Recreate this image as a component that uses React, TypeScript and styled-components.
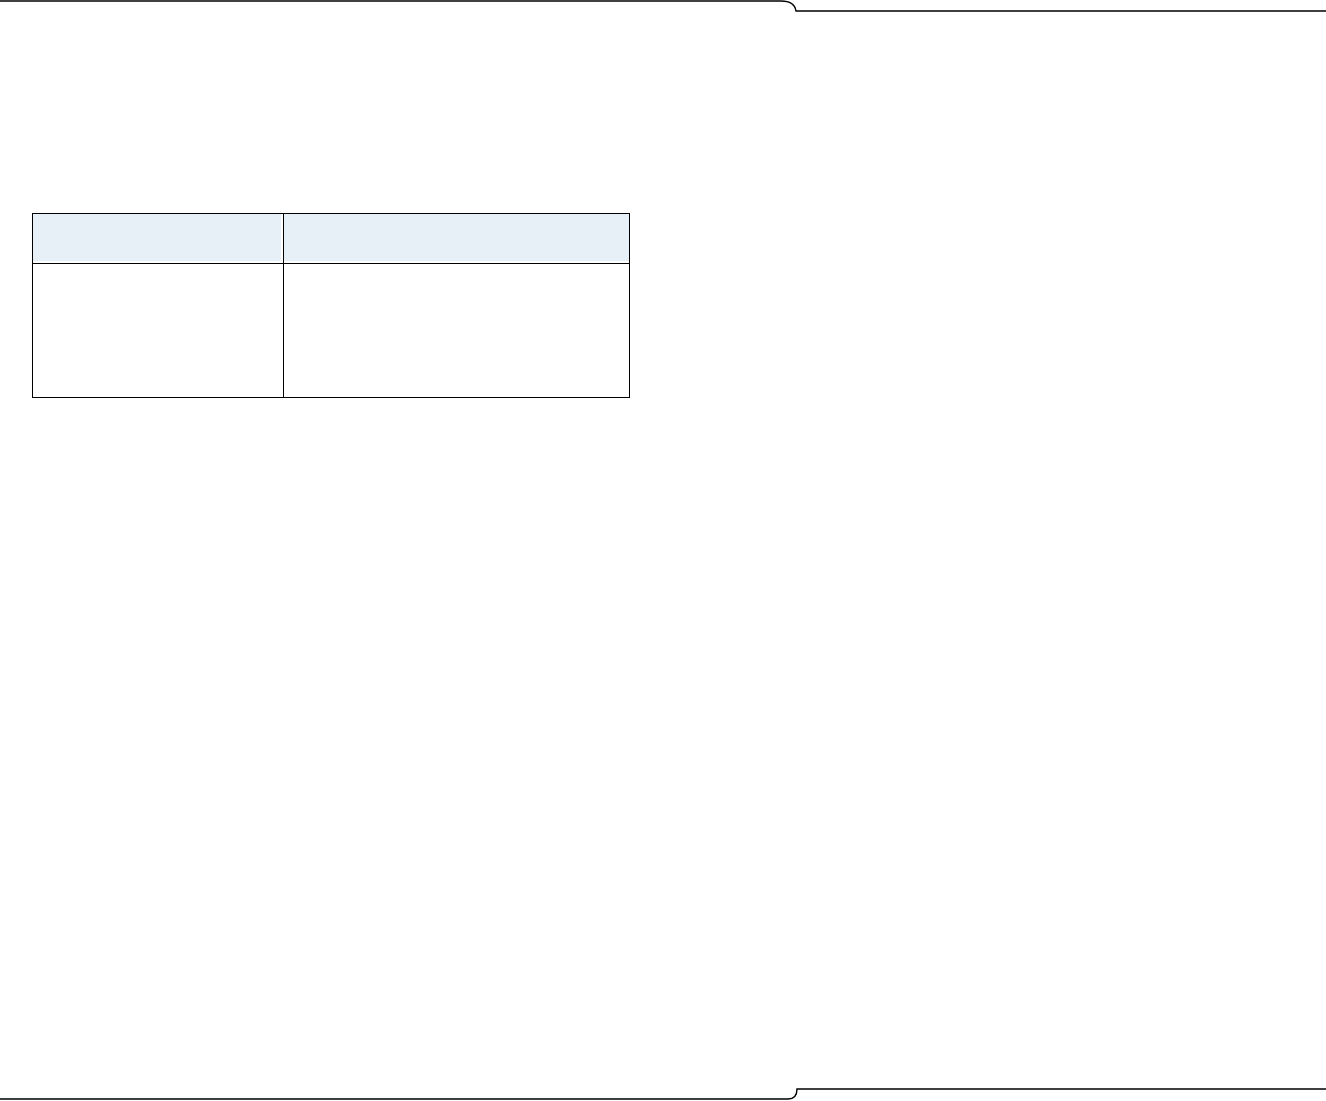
import React from "react";
import styled, { createGlobalStyle } from "styled-components";

const GlobalStyle = createGlobalStyle`
  html, body {
    margin: 0;
    padding: 0;
    background: #ffffff;
    font-family: "Liberation Sans", Arial, sans-serif;
  }
`;

const Page = styled.div`
  width: 1326px;
  height: 1101px;
  display: flex;
  flex-direction: column;
  overflow: hidden;
`;

const Edge = styled.svg`
  display: block;
  width: 1326px;
  height: 14px;
  flex: none;
`;

const Content = styled.div`
  flex: 1;
  padding: 199px 0 0 32px;
`;

const Table = styled.div`
  width: 596px;
  display: grid;
  grid-template-columns: 251px 1fr;
  grid-template-rows: 50px 133px;
  border: 1px solid #000;
  box-sizing: content-box;
`;

const HeadCell = styled.div<{ $last?: boolean }>`
  background: #e7eff7;
  border-right: ${({ $last }) => ($last ? "none" : "1px solid #000")};
  border-bottom: 1px solid #000;
  box-shadow: inset ${({ $last }) => ($last ? "0" : "-2px")} -2px 0 #ffffff;
`;

const BodyCell = styled.div<{ $last?: boolean }>`
  background: #ffffff;
  border-right: ${({ $last }) => ($last ? "none" : "1px solid #000")};
`;

const TopEdge = () => (
  <Edge viewBox="0 0 1326 14">
    <path
      d="M0 1 H781 C789 1 795 4 796 11 H1326"
      fill="none"
      stroke="#000"
      strokeWidth="1.4"
    />
  </Edge>
);

const BottomEdge = () => (
  <Edge viewBox="0 0 1326 14">
    <path
      d="M0 12 H788 C794 12 797 8 797 2 H1326"
      fill="none"
      stroke="#000"
      strokeWidth="1.4"
    />
  </Edge>
);

export default function App() {
  return (
    <>
      <GlobalStyle />
      <Page>
        <TopEdge />
        <Content>
          <Table>
            <HeadCell />
            <HeadCell $last />
            <BodyCell />
            <BodyCell $last />
          </Table>
        </Content>
        <BottomEdge />
      </Page>
    </>
  );
}
